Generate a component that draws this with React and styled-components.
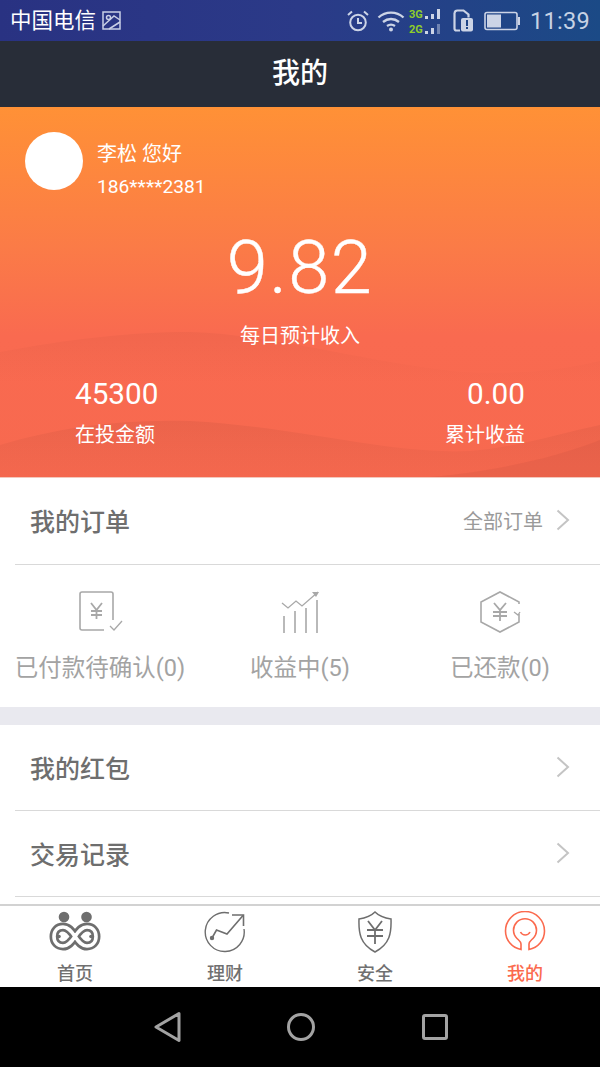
import React from "react";
import styled, { createGlobalStyle } from "styled-components";

const Global = createGlobalStyle`
  html, body { margin: 0; padding: 0; background: #fff; }
  body { font-family: Roboto, "Noto Sans CJK SC", sans-serif; }
`;
const Page = styled.div`
  width: 600px; height: 1067px; display: flex; flex-direction: column; overflow: hidden;
`;
const StatusBar = styled.div`
  height: 41px; flex: none; display: flex; align-items: center; justify-content: space-between;
  padding: 0 10px 0 10px; background: linear-gradient(90deg, #293282 0%, #2b3a88 50%, #1b4a86 100%);
  color: #fff; box-sizing: border-box;
`;
const Carrier = styled.div`
  display: flex; align-items: center; gap: 5px; font-size: 21.5px; line-height: 41px;
`;
const StatusRight = styled.div`
  display: flex; align-items: center; color: #ccd4e6;
`;
const Clock = styled.span`
  font-size: 23.5px; margin-left: 9px; letter-spacing: 0.3px; color: #c6d2e4;
`;
const Header = styled.div`
  height: 66px; flex: none; background: #282d38; color: #fff; font-size: 28px; font-weight: 500;
  display: flex; align-items: center; justify-content: center; box-sizing: border-box; padding-bottom: 7px;
`;
const Hero = styled.div`
  position: relative; height: 371px; flex: none; box-sizing: border-box; color: #fff; overflow: hidden;
  background: linear-gradient(180deg, #ff9136 0%, #fb7b47 38%, #f96a50 62%, #f7694f 100%);
  border-bottom: 1px solid #f3c8bd;
`;
const Waves = styled.svg`
  position: absolute; left: 0; top: 0; width: 600px; height: 371px;
`;
const HeroBody = styled.div`
  position: relative; display: flex; flex-direction: column; height: 100%;
`;
const User = styled.div`
  display: flex; gap: 14px; padding: 25px 25px 0;
`;
const Avatar = styled.div`
  width: 58px; height: 58px; border-radius: 50%; background: #fff;
`;
const UserText = styled.div`
  display: flex; flex-direction: column; gap: 6px; padding-top: 9px; font-size: 20px; line-height: 27px;
`;
const Phone = styled.span`
  font-size: 19.2px; line-height: 25px;
`;
const Big = styled.div`
  text-align: center; font-size: 74px; line-height: 80px; margin-top: 29px; font-weight: 300; letter-spacing: 1.4px; -webkit-text-stroke: 0.4px #fff;
`;
const Sub = styled.div`
  text-align: center; font-size: 20px; line-height: 28px; margin-top: 14px;
`;
const Stats = styled.div`
  display: flex; justify-content: space-between; padding: 26px 75px 0;
`;
const Stat = styled.div`
  display: flex; flex-direction: column; align-items: ${p => (p.$right ? "flex-end" : "flex-start")};
`;
const StatValue = styled.span`
  font-size: 29.7px; line-height: 36px;
`;
const StatLabel = styled.span`
  font-size: 20px; line-height: 28px; margin-top: 9px;
`;
const Row = styled.div`
  height: ${p => p.$h || 86}px; flex: none; box-sizing: border-box; margin-left: 15px; padding: 0 30px 2px 15px;
  display: flex; align-items: center; justify-content: space-between;
  border-bottom: 1px solid #d9d9d9; color: #6e6e6e; font-size: 25px; font-weight: 500;
`;
const RowRight = styled.div`
  display: flex; align-items: center; gap: 13px; font-size: 20px; font-weight: 400; color: #9a9a9a;
`;
const Chevron = () => (
  <svg width="14" height="22" viewBox="0 0 14 22" fill="none" stroke="#c4c4c4" strokeWidth="2">
    <path d="M1.5 1.5L12 11L1.5 20.5" />
  </svg>
);
const Orders = styled.div`
  height: 142px; flex: none; display: grid; grid-template-columns: 1fr 1fr 1fr; box-sizing: border-box; padding-top: 24px;
`;
const Order = styled.div`
  display: flex; flex-direction: column; align-items: center; gap: 17px; color: #a3a3a3; font-size: 23.5px; line-height: 32px;
`;
const IconSlot = styled.div`
  height: 46px; display: flex; align-items: center; justify-content: center;
`;
const Gap = styled.div`
  height: 18px; flex: none; background: #e9e9ef;
`;
const Fill = styled.div`
  flex: 1; min-height: 0;
`;
const Tabs = styled.div`
  height: 83px; flex: none; box-sizing: border-box; border-top: 2px solid #d2d2d2;
  display: grid; grid-template-columns: repeat(4, 1fr); background: #fff;
`;
const Tab = styled.div`
  display: flex; flex-direction: column; align-items: center; padding-top: 4px;
  color: ${p => (p.$active ? "#fb6a4e" : "#707070")}; font-size: 18px; font-weight: 500; line-height: 24px;
`;
const TabIcon = styled.div`
  height: 44px; display: flex; align-items: center; justify-content: center; margin-bottom: 8px;
`;
const Nav = styled.div`
  height: 80px; flex: none; background: #000; display: flex; align-items: center; justify-content: center;
`;

const Alarm = () => (
  <svg width="24" height="24" viewBox="0 0 24 24" fill="none" stroke="currentColor" strokeWidth="2">
    <circle cx="12" cy="13.5" r="7.8" /><path d="M12 9v5h4" /><path d="M2 6l4-3.5M22 6l-4-3.5" />
  </svg>
);
const Wifi = () => (
  <svg width="28" height="22" viewBox="0 0 28 22" fill="none" stroke="currentColor" strokeWidth="2.3" style={{ marginLeft: 7 }}>
    <path d="M1.5 7.5C8.5 1 19.5 1 26.5 7.5M6 12c4.800-4 11.200-4 16 0M10 16c2.500-1.800 5.500-1.800 8 0" />
    <circle cx="14" cy="19.500" r="2" fill="currentColor" stroke="none" />
  </svg>
);
const Signal = () => (
  <svg width="34" height="30" viewBox="0 0 34 30" style={{ marginLeft: 4 }}>
    <text x="0" y="12" fontSize="11" fontWeight="700" fill="#8fce2a" fontFamily="Roboto">3G</text>
    <text x="0" y="27" fontSize="11" fontWeight="700" fill="#8fce2a" fontFamily="Roboto">2G</text>
    <g fill="#ccd4e6">
      <rect x="16" y="10" width="3" height="3" /><rect x="22" y="8" width="3" height="5" /><rect x="28" y="3" width="3" height="10" />
      <rect x="16" y="25" width="3" height="3" /><rect x="22" y="22" width="3" height="6" />
      <rect x="28" y="18" width="3" height="10" opacity="0.45" />
    </g>
  </svg>
);
const Sim = () => (
  <svg width="20" height="24" viewBox="0 0 20 24" style={{ marginLeft: 10 }}>
    <path d="M1.500 4a3 3 0 0 1 3-2.500h6l5 4v3M7 21.500H3.500a2 2 0 0 1-2-2V4" fill="none" stroke="currentColor" strokeWidth="2.200" />
    <rect x="8" y="9" width="12" height="13.500" rx="2" fill="currentColor" />
    <rect x="13" y="11" width="2" height="6" fill="#1f4486" /><rect x="13" y="18" width="2" height="2" fill="#1f4486" />
  </svg>
);
const Battery = () => (
  <svg width="37" height="20" viewBox="0 0 37 20" style={{ marginLeft: 11 }}>
    <rect x="1" y="1.500" width="32" height="17" rx="2" fill="none" stroke="currentColor" strokeWidth="1.600" />
    <rect x="3" y="3.500" width="14" height="13" fill="currentColor" />
    <rect x="34" y="6" width="2" height="8" fill="currentColor" />
  </svg>
);
const Picture = () => (
  <svg width="19" height="19" viewBox="0 0 19 19" fill="none" stroke="#c9cfe6" strokeWidth="1.500" style={{ marginLeft: 1 }}>
    <rect x="1" y="1" width="17" height="17" /><circle cx="6.500" cy="6.500" r="2" /><path d="M1 15L12 5l6 4M7 18l11-7" />
  </svg>
);
const BillIcon = () => (
  <svg width="46" height="44" viewBox="0 0 46 44" fill="none" stroke="#a8a8a8" strokeWidth="1.600">
    <path d="M27 40H5a2 2 0 0 1-2-2V4a2 2 0 0 1 2-2h29a2 2 0 0 1 2 2v26" />
    <path d="M33 36l4 4 8-9" strokeWidth="1.300" />
    <path d="M14 13l5.500 7 5.500-7M19.500 20v9M14 21h11M14 25h11" strokeWidth="1.800" />
  </svg>
);
const ChartIcon = () => (
  <svg width="40" height="46" viewBox="0 0 40 46" fill="none" stroke="#a8a8a8" strokeWidth="1.600">
    <path d="M2 14l6 5 8-7 6 5L38 3" strokeWidth="1.300" />
    <path d="M32 3h7l-3 5z" fill="#a8a8a8" stroke="none" />
    <path d="M4 27v17M15 22v22M26 19v25M37 11v33" />
  </svg>
);
const HexIcon = () => (
  <svg width="42" height="44" viewBox="0 0 42 44" fill="none" stroke="#a8a8a8" strokeWidth="1.600">
    <path d="M40 14v-2L21 2 2 12v20l19 10 19-10v-8" />
    <path d="M35 22l4 3 2-3" strokeWidth="1.300" />
    <path d="M15 13l6 7 6-7M21 20v11M14 22h14M14 26h14" strokeWidth="1.800" />
  </svg>
);
const loop = "M26 25.500C22 19.500 19 16 14 16C8.500 16 5 20 5 25.500S8.500 35 14 35C19 35 22 31.500 26 25.500C30 19.500 33 16 38 16C43.500 16 47 20 47 25.500S43.500 35 38 35C33 35 30 31.500 26 25.500Z";
const HomeIcon = () => (
  <svg width="52" height="42" viewBox="0 0 52 42" fill="none">
    <path d={loop} stroke="#6e6e6e" strokeWidth="9" />
    <path d={loop} stroke="#fff" strokeWidth="3.600" />
    <circle cx="15" cy="6" r="5.300" fill="#6e6e6e" />
    <circle cx="37.500" cy="6" r="5.300" fill="#6e6e6e" />
    <circle cx="10" cy="25.500" r="1.800" fill="#6e6e6e" />
    <circle cx="42" cy="25.500" r="1.800" fill="#6e6e6e" />
  </svg>
);
const GrowthIcon = () => (
  <svg width="42" height="42" viewBox="0 0 42 42" fill="none" stroke="#6e6e6e" strokeWidth="1.400">
    <path d="M40 18a19.500 19.500 0 1 1-15-16" />
    <path d="M8 27l4.500-8 10.500 4L39 4.500" strokeWidth="1.600" />
    <path d="M28 4h11.500v11" strokeWidth="1.600" />
    <circle cx="8" cy="27" r="1.500" fill="#6e6e6e" />
  </svg>
);
const ShieldIcon = () => (
  <svg width="36" height="42" viewBox="0 0 36 42" fill="none" stroke="#6e6e6e" strokeWidth="1.500">
    <path d="M18 1c4 4 9 6 16 7 .5 14-1 25-16 33C3 33 1.500 22 2 8c7-1 12-3 16-7z" />
    <path d="M11 10l7 9 7-9M18 19v14M10 19h16M10 25h16" strokeWidth="1.800" />
  </svg>
);
const MeIcon = () => (
  <svg width="42" height="42" viewBox="0 0 42 42" fill="none" stroke="#fb6a4e" strokeWidth="1.600">
    <path d="M17 38.500C8 37 1.500 29 1.500 20A19.500 19.500 0 0 1 40.500 20C40.500 29 34 37 25 38.500V33C25 30.500 27 29.500 29 27.500A11.500 11.500 0 1 0 13 27.500C15 29.500 17 30.500 17 33Z" />
    <path d="M16.500 21c2 4 7.500 4 9.500 0" />
  </svg>
);

const orders = [
  { label: "已付款待确认(0)", Icon: BillIcon },
  { label: "收益中(5)", Icon: ChartIcon },
  { label: "已还款(0)", Icon: HexIcon },
];
const tabs = [
  { label: "首页", Icon: HomeIcon },
  { label: "理财", Icon: GrowthIcon },
  { label: "安全", Icon: ShieldIcon },
  { label: "我的", Icon: MeIcon, active: true },
];

export default function App() {
  return (
    <Page>
      <Global />
      <StatusBar>
        <Carrier>中国电信<Picture /></Carrier>
        <StatusRight>
          <Alarm /><Wifi /><Signal /><Sim /><Battery /><Clock>11:39</Clock>
        </StatusRight>
      </StatusBar>
      <Header>我的</Header>
      <Hero>
        <Waves viewBox="0 0 600 371">
          <defs>
            <linearGradient id="w1" x1="0" y1="0" x2="0" y2="1">
              <stop offset="0" stopColor="#c9543f" stopOpacity="0.16" />
              <stop offset="0.35" stopColor="#c9543f" stopOpacity="0" />
            </linearGradient>
            <linearGradient id="w2" x1="0" y1="0" x2="0" y2="1">
              <stop offset="0" stopColor="#c9543f" stopOpacity="0.26" />
              <stop offset="1" stopColor="#c9543f" stopOpacity="0.06" />
            </linearGradient>
          </defs>
          <path d="M0 245C70 232 130 225 190 225 290 228 410 268 500 266 545 265 575 260 600 254V371H0Z" fill="url(#w1)" />
          <path d="M0 338C60 320 120 312 190 314 300 320 390 348 470 344 520 340 565 325 600 318V371H0Z" fill="url(#w2)" />
          <path d="M415 371C470 368 545 355 600 333V371Z" fill="#c9543f" fillOpacity="0.22" />
        </Waves>
        <HeroBody>
          <User>
            <Avatar />
            <UserText>
              <span>李松 您好</span>
              <Phone>186****2381</Phone>
            </UserText>
          </User>
          <Big>9.82</Big>
          <Sub>每日预计收入</Sub>
          <Stats>
            <Stat><StatValue>45300</StatValue><StatLabel>在投金额</StatLabel></Stat>
            <Stat $right><StatValue>0.00</StatValue><StatLabel>累计收益</StatLabel></Stat>
          </Stats>
        </HeroBody>
      </Hero>
      <Row $h={87}>
        <span>我的订单</span>
        <RowRight>全部订单<Chevron /></RowRight>
      </Row>
      <Orders>
        {orders.map(({ label, Icon }) => (
          <Order key={label}>
            <IconSlot><Icon /></IconSlot>
            {label}
          </Order>
        ))}
      </Orders>
      <Gap />
      <Row><span>我的红包</span><Chevron /></Row>
      <Row><span>交易记录</span><Chevron /></Row>
      <Fill />
      <Tabs>
        {tabs.map(({ label, Icon, active }) => (
          <Tab key={label} $active={active}>
            <TabIcon><Icon /></TabIcon>
            {label}
          </Tab>
        ))}
      </Tabs>
      <Nav>
        <svg width="320" height="40" viewBox="0 0 320 40" fill="none" stroke="#a3a3a3" strokeWidth="3" strokeLinejoin="round">
          <path d="M39 6.500L16 20l23 13.500z" />
          <circle cx="161" cy="20" r="12.500" />
          <rect x="283.500" y="8.500" width="23" height="23" rx="1.500" />
        </svg>
      </Nav>
    </Page>
  );
}
